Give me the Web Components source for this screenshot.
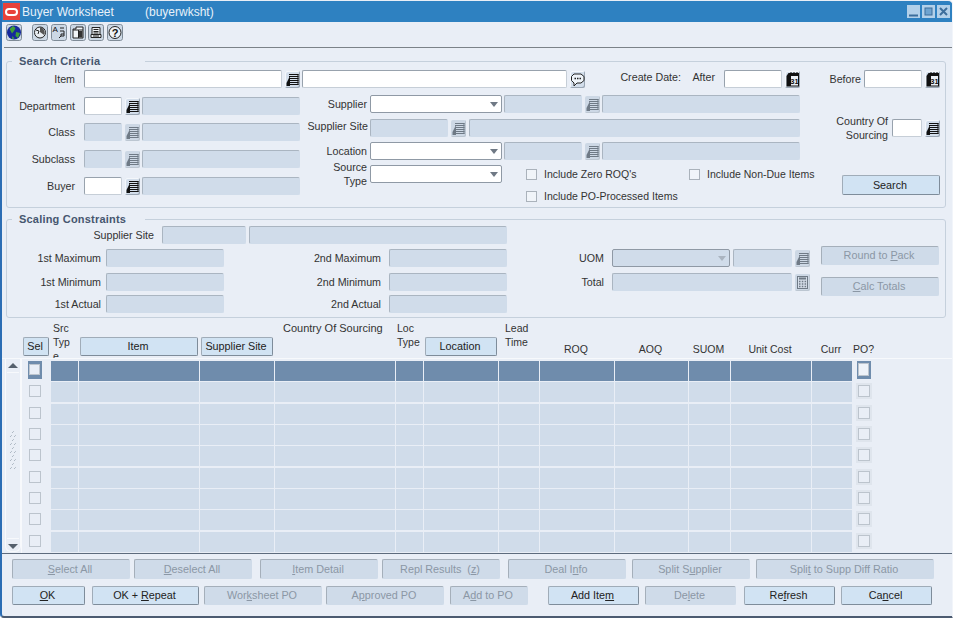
<!DOCTYPE html>
<html><head><meta charset="utf-8"><style>
html,body{margin:0;padding:0;background:#fff}
body{font:10.5px/14px "Liberation Sans",Arial,sans-serif;color:#333}
</style></head><body>
<x-window>
  <x-titlebar></x-titlebar>
  <x-toolbar></x-toolbar>
  <x-search></x-search>
  <x-scaling></x-scaling>
  <x-table></x-table>
  <x-actions></x-actions>
</x-window>
<script>
class Base extends HTMLElement{
  constructor(){super();this.attachShadow({mode:'open'});this.shadowRoot.innerHTML='<style>'+this.constructor.css+'</style>'+this.constructor.html(this)}
  connectedCallback(){
    const w=this.getAttribute('w'),ml=this.getAttribute('ml'),mt=this.getAttribute('mt'),h=this.getAttribute('h');
    if(w)this.style.width=w+'px';if(h)this.style.height=h+'px';
    if(ml)this.style.marginLeft=ml+'px';if(mt)this.style.marginTop=mt+'px';
  }
}
function def(name,css,html){customElements.define(name,class extends Base{static css=css;static html=html||(()=>'<slot></slot>')})}

const lovSvg='<svg width="15" height="17" viewBox="0 0 15 17"><path d="M4 3.500h9.500M4 5.500h9.500M4 7.500h9.500M4 9.500h9.500M4 11.500h9.500M4 13.500h9.500" stroke="currentColor" fill="none"/><path d="M5 5v10H1.500V12z" fill="currentColor"/><path d="M13 3v11" stroke="currentColor"/></svg>';
const calSvg='<svg width="15" height="17" viewBox="0 0 15 17"><path d="M1.500 5l2-3h10.500v13.500H1.500z" fill="#111"/><rect x="6" y="5" width="7" height="9.500" fill="#e9eef4"/><path d="M6 1v3M9 1v3M12 1v3" stroke="#111"/><text x="9.500" y="12.800" font-family="Liberation Sans" font-size="7.500" font-weight="bold" text-anchor="middle" fill="#111">31</text></svg>';
const chatSvg='<svg width="15" height="17" viewBox="0 0 15 17"><path d="M4 3h7l3 2.500v4L11 12H7l-3 3v-3L1.500 9.500v-4z" fill="#eef3f8" stroke="#222"/><path d="M4.500 7.500h1.500M7 7.500h1.500M9.500 7.500h1.500" stroke="#222" stroke-width="1.400"/></svg>';
const calcSvg='<svg width="15" height="17" viewBox="0 0 15 17"><rect x="2.500" y="2.500" width="10" height="12" fill="#d4dde8" stroke="#6f7a86"/><path d="M4 4.500h7" stroke="#6f7a86" stroke-width="2"/><path d="M4 7.500h1.500M6.800 7.500h1.500M9.600 7.500h1.500M4 10h1.500M6.800 10h1.500M9.600 10h1.500M4 12.500h1.500M6.800 12.500h1.500M9.600 12.500h1.500" stroke="#6f7a86" stroke-width="1.500"/></svg>';

def('x-lbl',':host{display:block;text-align:right;flex:none;white-space:nowrap;line-height:14px;font-size:10.700px;color:#333}');
def('x-input',`:host{display:block;flex:none;height:18px;box-sizing:border-box;background:#fff;border:1px solid #c6ced7;border-top-color:#98a2ad;border-left-color:#98a2ad;border-radius:2px}
:host([off]){background:#d0dcea;border-color:#d0dcea;border-top-color:#aab5c1;border-left-color:#aab5c1}`,()=>'');
def('x-select',`:host{display:flex;justify-content:flex-end;align-items:center;flex:none;height:18px;box-sizing:border-box;background:#fff;border:1px solid #8f99a5;border-radius:2px;color:#6f7985}
:host([off]){background:#d0dcea;color:#aab4c0}
i{width:0;height:0;border:4px solid transparent;border-top:5px solid currentColor;border-bottom:0;margin-right:3px}`,()=>'<i></i>');
def('x-lov',`:host{display:block;flex:none;width:15px;height:17px;line-height:0;background:#d3deeb;border-radius:2px;color:#111;box-shadow:inset -1px -1px 0 #9aa6b3,inset 1px 1px 0 #f4f7fb}
:host([off]){color:#6f7a86;box-shadow:inset -1px -1px 0 #bcc6d1;background:#cdd8e5}svg{display:block}`,(t)=>{const k=t.getAttribute('kind');return k=='cal'?calSvg:k=='chat'?chatSvg:k=='calc'?calcSvg:lovSvg});
def('x-btn',`:host{display:flex;align-items:center;justify-content:center;flex:none;height:20px;box-sizing:border-box;background:#d1e3f3;border:1px solid #7e8c9a;border-top-color:#a0acb8;border-left-color:#a0acb8;border-radius:2px;color:#222;font-size:10.800px;white-space:pre;padding:0 2px 1px 0}
:host([off]){background:#cfdbe9;color:#8b97a5;border-color:#cfdbe9;border-top-color:#a5afba;border-left-color:#a5afba}`);
def('x-check',`:host{display:flex;align-items:center;flex:none;color:#333;white-space:nowrap}
i{display:block;width:11px;height:11px;box-sizing:border-box;background:#f0f4f9;border:1px solid #aab2bb;margin-right:7px;flex:none}`,()=>'<i></i><slot></slot>');
def('x-group',`:host{display:block;position:relative;box-sizing:border-box;margin:0 6px 0 4px;border:1px solid #c5d0dc;border-radius:3px}
b{position:absolute;left:-1px;top:-8px;margin-left:6px;padding:0 0 0 7px;width:126px;background:#e9eef6;font-weight:bold;font-size:11px;color:#46566f;line-height:14px;letter-spacing:.2px}`,
  (t)=>'<b>'+t.getAttribute('title')+'</b><slot></slot>');

def('x-window',`:host{display:flex;flex-direction:column;position:relative;width:953px;height:618px;box-sizing:border-box;overflow:hidden;background:#e9eef6;border-left:2px solid #2b6db4;border-right:1px solid #f2f5fa;border-bottom:2px solid #4c5b70;border-radius:0 4px 0 4px}`);
def('x-titlebar',`:host{display:flex;align-items:center;flex:none;height:21px;margin:1px -1px 0 -2px;padding-left:3px;background:#2e81c1;color:#e8f1f9;font-size:12px;border-radius:0 5px 0 0}
.logo{width:17px;height:17px;background:#e8413a;display:flex;align-items:center;justify-content:center;margin-right:2px}
.logo i{display:block;width:13px;height:8px;border:2px solid #fff;border-radius:6px;box-sizing:border-box}
.t{width:123px}.sp{flex:1}
.wb{width:13px;height:13px;margin-right:2px;background:#b2d0e9;display:block;line-height:0}.wb:last-child{margin-right:3px}`,
()=>`<span class="logo"><i></i></span><span class="t">Buyer Worksheet</span><span>(buyerwksht)</span><span class="sp"></span>
<svg class="wb" viewBox="0 0 13 13"><path d="M2 10.500h9" stroke="#3c6e9c" stroke-width="2"/></svg>
<svg class="wb" viewBox="0 0 13 13"><rect x="3" y="3" width="7" height="7" fill="#6fa4d0" stroke="#3c6e9c"/></svg>
<svg class="wb" viewBox="0 0 13 13"><path d="M3 3l7 7M10 3l-7 7" stroke="#3c6e9c" stroke-width="2"/></svg>`);
def('x-toolbar',`:host{display:flex;align-items:flex-start;flex:none;height:26px;box-sizing:border-box;margin-left:2px;padding:2px 0 0 2px;border-bottom:1px solid #7b8288;background:#e9eef6}
.b{display:block;width:16px;height:17px;flex:none;margin-right:2.750px;border-radius:2px}
.g{margin-right:10px}`,
()=>{const box='<rect x=".5" y=".5" width="15" height="16" rx="2" fill="#ccd8e5" stroke="#7f8b97"/>';
return `<svg class="b g" viewBox="0 0 16 17">${box}<circle cx="8" cy="8.500" r="7" fill="#16299c"/><path d="M3.500 5l3.500-3 2.500 2-1.500 3-2 2.500zM10 8l4 1-2 5-2.500-2z" fill="#3f9f38"/><path d="M6.500 12l2 2.500-2.500.5z" fill="#3f9f38"/></svg>
<svg class="b" viewBox="0 0 16 17">${box}<circle cx="8" cy="8.500" r="5.500" fill="#e8edf2" stroke="#222"/><path d="M8 3v5l4 3A5.500 5.500 0 0 0 8 3z" fill="#555"/><path d="M4 6l3 1-1 3" fill="none" stroke="#222"/></svg>
<svg class="b" viewBox="0 0 16 17">${box}<text x="1.500" y="8" font-family="Liberation Sans" font-size="8" fill="#111">A</text><path d="M9 4h4M9 7h4v5h-3v-2h3M8 14l2-2" fill="none" stroke="#222"/></svg>
<svg class="b" viewBox="0 0 16 17">${box}<path d="M3 5h3V3h7v11H3z" fill="#f2f5f8" stroke="#222"/><path d="M3 6h10M8.500 6v8" stroke="#222"/><path d="M9 7h3.500v6.500H9z" fill="#333"/></svg>
<svg class="b" viewBox="0 0 16 17">${box}<path d="M4 3.500h8v7H4zM3 10.500h10v3H3z" fill="#eef2f6" stroke="#222"/><path d="M5.500 5.500h5M5.500 7.500h5M5.500 9h5M5 12h6" stroke="#222"/></svg>
<svg class="b" viewBox="0 0 16 17">${box}<circle cx="8" cy="8.500" r="6" fill="#eef2f6" stroke="#222"/><text x="8" y="12.500" text-anchor="middle" font-family="Liberation Sans" font-weight="bold" font-size="11" fill="#111">?</text></svg>`});

def('x-search',`:host{display:block;flex:none;margin-top:13px}
x-group{height:147px}
.r{display:flex;align-items:center;height:18px}
.top{margin-top:8px}.body{display:flex;margin-top:7px}
.l{width:293px;padding-top:2px;flex:none}.m{width:500px;flex:none}.x{flex:none}`,
()=>`<x-group title="Search Criteria">
 <div class="r top"><x-lbl w="68">Item</x-lbl><x-input ml="9" w="198"></x-input><x-lov ml="3"></x-lov><x-input ml="2" w="265"></x-input><x-lov ml="3" kind="chat"></x-lov>
  <x-lbl w="96" style="margin-bottom:4px">Create Date:</x-lbl><x-lbl w="34" style="margin-bottom:4px">After</x-lbl><x-input ml="9" w="58"></x-input><x-lov ml="3" kind="cal"></x-lov>
  <x-lbl w="61">Before</x-lbl><x-input ml="3" w="58"></x-input><x-lov ml="3" kind="cal"></x-lov></div>
 <div class="body">
  <div class="l">
   <div class="r"><x-lbl w="68">Department</x-lbl><x-input ml="9" w="38"></x-input><x-lov ml="3"></x-lov><x-input off ml="2" w="158"></x-input></div>
   <div class="r" style="margin-top:8px"><x-lbl w="68">Class</x-lbl><x-input off ml="9" w="38"></x-input><x-lov off ml="3"></x-lov><x-input off ml="2" w="158"></x-input></div>
   <div class="r" style="margin-top:9px"><x-lbl w="68">Subclass</x-lbl><x-input off ml="9" w="38"></x-input><x-lov off ml="3"></x-lov><x-input off ml="2" w="158"></x-input></div>
   <div class="r" style="margin-top:9px"><x-lbl w="68">Buyer</x-lbl><x-input ml="9" w="38"></x-input><x-lov ml="3"></x-lov><x-input off ml="2" w="158"></x-input></div>
  </div>
  <div class="m">
   <div class="r"><x-lbl w="67">Supplier</x-lbl><x-select ml="3" w="132"></x-select><x-input off ml="2" w="78"></x-input><x-lov off ml="3"></x-lov><x-input off ml="2" w="198"></x-input></div>
   <div class="r" style="margin-top:6px"><x-lbl w="68" style="margin-bottom:5px">Supplier Site</x-lbl><x-input off ml="2" w="78"></x-input><x-lov off ml="3"></x-lov><x-input off ml="3" w="331"></x-input></div>
   <div class="r" style="margin-top:5px"><x-lbl w="67">Location</x-lbl><x-select ml="3" w="132"></x-select><x-input off ml="2" w="78"></x-input><x-lov off ml="3"></x-lov><x-input off ml="2" w="198"></x-input></div>
   <div class="r" style="margin-top:5px"><x-lbl w="67">Source<br>Type</x-lbl><x-select ml="3" w="132"></x-select><x-check ml="24" w="163">Include Zero ROQ's</x-check><x-check>Include Non-Due Items</x-check></div>
   <div class="r" style="margin:4px 0 0 226px"><x-check>Include PO-Processed Items</x-check></div>
  </div>
  <div class="x">
   <div class="r" style="margin-top:24px"><x-lbl w="88">Country Of<br>Sourcing</x-lbl><x-input ml="4" w="30"></x-input><x-lov ml="3"></x-lov></div>
   <x-btn ml="42" mt="38" w="98">Search</x-btn>
  </div>
 </div></x-group>`);

def('x-scaling',`:host{display:block;flex:none;margin-top:11px}
x-group{height:99px}
.r{display:flex;align-items:center;height:18px}
x-btn{height:19px}
.low{display:flex;margin-top:2px}.a{width:500px;padding-top:3px;flex:none}.b{width:303px;padding-top:3px;flex:none}`,
()=>`<x-group title="Scaling Constraints">
 <div class="r" style="margin-top:6px"><x-lbl w="147">Supplier Site</x-lbl><x-input off ml="8" w="84"></x-input><x-input off ml="3" w="258"></x-input></div>
 <div class="low">
  <div class="a">
   <div class="r"><x-lbl w="94">1st Maximum</x-lbl><x-input off ml="5" w="118"></x-input><x-lbl w="157">2nd Maximum</x-lbl><x-input off ml="8" w="118"></x-input></div>
   <div class="r" style="margin-top:6px"><x-lbl w="94">1st Minimum</x-lbl><x-input off ml="5" w="118"></x-input><x-lbl w="157">2nd Minimum</x-lbl><x-input off ml="8" w="118"></x-input></div>
   <div class="r" style="margin-top:4px"><x-lbl w="94">1st Actual</x-lbl><x-input off ml="5" w="118"></x-input><x-lbl w="157">2nd Actual</x-lbl><x-input off ml="8" w="118"></x-input></div>
  </div>
  <div class="b">
   <div class="r"><x-lbl w="97">UOM</x-lbl><x-select off ml="8" w="118"></x-select><x-input off ml="3" w="59"></x-input><x-lov off ml="3"></x-lov></div>
   <div class="r" style="margin-top:6px"><x-lbl w="97">Total</x-lbl><x-input off ml="8" w="180"></x-input><x-lov off ml="3" kind="calc"></x-lov></div>
  </div>
  <div>
   <x-btn off ml="11" w="118"><span>Round to <u>P</u>ack</span></x-btn>
   <x-btn off ml="11" mt="12" w="118"><span><u>C</u>alc Totals</span></x-btn>
  </div>
 </div></x-group>`);

const COLS='28px 27px 120px 74px 120px 27px 74px 40px 74px 73px 41px 80px 40px 21px';
def('x-table',`:host{display:block;flex:none;margin-top:3px}
.hd{display:grid;grid-template-columns:${COLS};grid-template-rows:37px;column-gap:1px;height:37px;overflow:hidden;margin-left:20px;color:#333}
.hd>*{min-width:0;white-space:nowrap}
.bt{display:flex;align-self:end;height:19px;margin:0 1px 2px}
.c{text-align:center;align-self:end;padding:0 2px 2px 0}
.t{line-height:14px}
.main{display:flex;height:196px;box-sizing:border-box;border-top:1px solid #f7f9fc;border-bottom:1px solid #5d6b7d;margin-right:-1px}
.sb{width:16px;margin-left:3px;height:193px;flex:none;box-sizing:border-box;border:1px solid #f7f9fc;border-top:0;border-radius:0 0 6px 6px;display:flex;flex-direction:column;align-items:center;color:#55606d}
.sb svg{display:block;flex:none}
.grid{display:grid;grid-template-columns:${COLS};column-gap:1px;grid-auto-rows:20px;row-gap:1.330px;padding-top:2px;border-left:1px solid #f7f9fc;align-content:start}
.f{background:#d0dcea}.s{background:#6f8cac}
.k{display:flex;align-items:center;justify-content:center;padding-bottom:2px}
.k.a{padding-right:3px}
.k i{display:block;width:12px;height:12px;box-sizing:border-box;border:1px solid #bcc4cd;background:#e9eef6}
.k.p i{outline:2px solid #dfe5ed}
.k.on i{width:14px;height:18px;outline:0;border:solid #6f8cac;border-width:3px 2px 4px 1px;box-shadow:inset 0 0 0 1px #bcc4cd;background:#e9eef6}
.k.p.on i{border-width:2px 2px 3px 1px;background:#eef2f8}`,
()=>{
 let rows='';
 for(let r=0;r<9;r++){
  const sel=r==0;
  rows+=`<div class="k a${sel?' on':''}"><i></i></div>`;
  for(let c=0;c<12;c++)rows+=`<div class="${sel?'s':'f'}"></div>`;
  rows+=`<div class="k p${sel?' on':''}"><i></i></div>`;
 }
 let dots='';for(let y=0;y<40;y+=8)dots+=`<path d="M1 ${y+7}l2-2M3 ${y+3}l2-2M5 ${y+7}l2-2" stroke="#97a3b0" stroke-dasharray="1 1" fill="none"/>`;
 return `<div class="hd">
 <x-btn class="bt"><span>Sel</span></x-btn>
 <div class="t" style="padding-left:2px">Src<br>Typ<br>e</div>
 <x-btn class="bt"><span>Item</span></x-btn>
 <x-btn class="bt"><span>Supplier Site</span></x-btn>
 <div class="t" style="padding-left:8px;font-size:11px">Country Of Sourcing</div>
 <div class="t" style="padding-left:1px">Loc<br>Type</div>
 <x-btn class="bt"><span>Location</span></x-btn>
 <div class="t" style="padding-left:6px">Lead<br>Time</div>
 <div class="c">ROQ</div><div class="c">AOQ</div><div class="c">SUOM</div><div class="c">Unit Cost</div><div class="c">Curr</div><div class="c">PO?</div>
 </div>
 <div class="main">
  <div class="sb">
   <svg width="14" height="14" viewBox="0 0 14 14" style="margin-top:1px"><path d="M2 8l5-5 5 5z" fill="currentColor"/><path d="M1 12.500h12" stroke="#f7f9fc"/></svg>
   <svg width="8" height="42" viewBox="0 0 8 42" style="margin-top:56px">${dots}</svg>
   <svg width="14" height="14" viewBox="0 0 14 14" style="margin-top:65px"><path d="M1 1.500h12" stroke="#f7f9fc"/><path d="M2 7l5 5 5-5z" fill="currentColor"/></svg>
  </div>
  <div class="grid">${rows}</div>
 </div>`});

def('x-actions',`:host{display:block;flex:none;margin:5px 0 0 10px}
.r{display:flex}.two{margin-top:7px}.two x-btn{height:19px}`,
()=>`<div class="r">
 <x-btn off w="118"><span><u>S</u>elect All</span></x-btn>
 <x-btn off ml="4" w="118"><span><u>D</u>eselect All</span></x-btn>
 <x-btn off ml="8" w="118"><span><u>I</u>tem Detail</span></x-btn>
 <x-btn off ml="4" w="118"><span>Repl Results  (<u>z</u>)</span></x-btn>
 <x-btn off ml="8" w="118"><span>Deal I<u>n</u>fo</span></x-btn>
 <x-btn off ml="6" w="118"><span>Split S<u>u</u>pplier</span></x-btn>
 <x-btn off ml="6" w="178"><span>Spli<u>t</u> to Supp Diff Ratio</span></x-btn>
</div><div class="r two">
 <x-btn w="73"><span><u>O</u>K</span></x-btn>
 <x-btn ml="7" w="107"><span>OK + <u>R</u>epeat</span></x-btn>
 <x-btn off ml="5" w="118"><span>Wor<u>k</u>sheet PO</span></x-btn>
 <x-btn off ml="4" w="118"><span>A<u>p</u>proved PO</span></x-btn>
 <x-btn off ml="6" w="78"><span>A<u>d</u>d to PO</span></x-btn>
 <x-btn ml="20" w="91"><span>Add Ite<u>m</u></span></x-btn>
 <x-btn off ml="6" w="91"><span>De<u>l</u>ete</span></x-btn>
 <x-btn ml="8" w="91"><span>Re<u>f</u>resh</span></x-btn>
 <x-btn ml="6" w="91"><span>Ca<u>n</u>cel</span></x-btn>
</div>`);
</script>
</body></html>
